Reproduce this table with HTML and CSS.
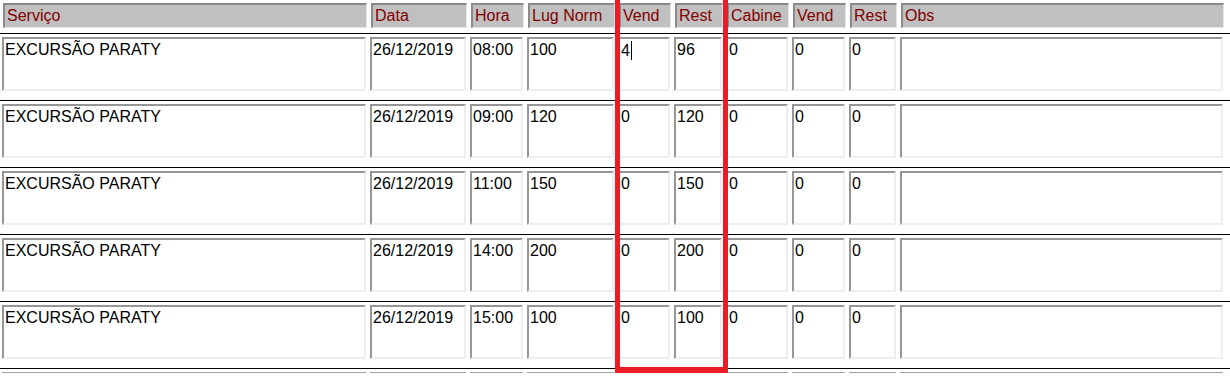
FILE: index.html
```html
<!DOCTYPE html>
<html lang="pt">
<head>
<meta charset="utf-8">
<title>Serviços</title>
<link rel="stylesheet" href="styles.css">
</head>
<body>
<div class="page">
  <div class="grid head">
    <div class="hc">Serviço</div>
    <div class="hc">Data</div>
    <div class="hc">Hora</div>
    <div class="hc">Lug Norm</div>
    <div class="hc">Vend</div>
    <div class="hc">Rest</div>
    <div class="hc">Cabine</div>
    <div class="hc">Vend</div>
    <div class="hc">Rest</div>
    <div class="hc">Obs</div>
  </div>

  <div class="sep"></div>
  <div class="grid row">
    <div class="dc">EXCURSÃO PARATY</div>
    <div class="dc">26/12/2019</div>
    <div class="dc">08:00</div>
    <div class="dc">100</div>
    <div class="dc">4<span class="caret"></span></div>
    <div class="dc">96</div>
    <div class="dc">0</div>
    <div class="dc">0</div>
    <div class="dc">0</div>
    <div class="dc"></div>
  </div>

  <div class="sep"></div>
  <div class="grid row">
    <div class="dc">EXCURSÃO PARATY</div>
    <div class="dc">26/12/2019</div>
    <div class="dc">09:00</div>
    <div class="dc">120</div>
    <div class="dc">0</div>
    <div class="dc">120</div>
    <div class="dc">0</div>
    <div class="dc">0</div>
    <div class="dc">0</div>
    <div class="dc"></div>
  </div>

  <div class="sep"></div>
  <div class="grid row">
    <div class="dc">EXCURSÃO PARATY</div>
    <div class="dc">26/12/2019</div>
    <div class="dc">11:00</div>
    <div class="dc">150</div>
    <div class="dc">0</div>
    <div class="dc">150</div>
    <div class="dc">0</div>
    <div class="dc">0</div>
    <div class="dc">0</div>
    <div class="dc"></div>
  </div>

  <div class="sep"></div>
  <div class="grid row">
    <div class="dc">EXCURSÃO PARATY</div>
    <div class="dc">26/12/2019</div>
    <div class="dc">14:00</div>
    <div class="dc">200</div>
    <div class="dc">0</div>
    <div class="dc">200</div>
    <div class="dc">0</div>
    <div class="dc">0</div>
    <div class="dc">0</div>
    <div class="dc"></div>
  </div>

  <div class="sep"></div>
  <div class="grid row">
    <div class="dc">EXCURSÃO PARATY</div>
    <div class="dc">26/12/2019</div>
    <div class="dc">15:00</div>
    <div class="dc">100</div>
    <div class="dc">0</div>
    <div class="dc">100</div>
    <div class="dc">0</div>
    <div class="dc">0</div>
    <div class="dc">0</div>
    <div class="dc"></div>
  </div>

  <div class="sep"></div>
  <div class="grid row cut">
    <div class="stub"></div>
    <div class="stub"></div>
    <div class="stub"></div>
    <div class="stub"></div>
    <div class="stub"></div>
    <div class="stub"></div>
    <div class="stub"></div>
    <div class="stub"></div>
    <div class="stub"></div>
    <div class="stub"></div>
  </div>

  <div class="highlight"></div>
</div>
</body>
</html>
```

FILE: styles.css
```css
html, body {
  margin: 0;
  padding: 0;
  background: #ffffff;
}

body {
  font-family: "Liberation Sans", Arial, sans-serif;
  font-size: 16px;
  color: #000000;
  overflow: hidden;
}

.page {
  position: relative;
  width: 1230px;
  height: 390px;
  overflow: hidden;
}

.grid {
  display: grid;
  grid-template-columns: 364px 96px 53px 87px 52px 48px 62px 53px 47px 323px;
  column-gap: 4px;
}

.head {
  margin-top: 3px;
  margin-bottom: 5px;
  padding-left: 3px;
}

.hc {
  box-sizing: border-box;
  height: 25px;
  background: #c0c0c0;
  color: #800000;
  border-style: solid;
  border-width: 2px 1px 1px 2px;
  border-color: #8a8a8a #e6e6e6 #e6e6e6 #8a8a8a;
  padding: 2px 0 0 2px;
  line-height: 18px;
  white-space: nowrap;
  overflow: hidden;
}

.sep {
  height: 1px;
  background: #000000;
}

.row {
  margin-top: 3px;
  margin-bottom: 9px;
  padding-left: 2px;
}

.dc {
  box-sizing: border-box;
  height: 54px;
  background: #ffffff;
  border-style: solid;
  border-width: 2px;
  border-color: #969696 #eeeeee #eeeeee #969696;
  padding: 2px 0 0 1px;
  line-height: 18px;
  white-space: nowrap;
  overflow: hidden;
}

.stub {
  height: 1px;
  background: #a0a0a0;
}

.caret {
  display: inline-block;
  width: 1px;
  height: 19px;
  background: #000000;
  vertical-align: -4px;
  margin-left: 1px;
}

.highlight {
  position: absolute;
  left: 615px;
  top: 0;
  width: 113px;
  height: 373px;
  box-sizing: border-box;
  border: 5px solid #ec1c24;
  border-top: 0;
  border-bottom-width: 6px;
  pointer-events: none;
}
```
